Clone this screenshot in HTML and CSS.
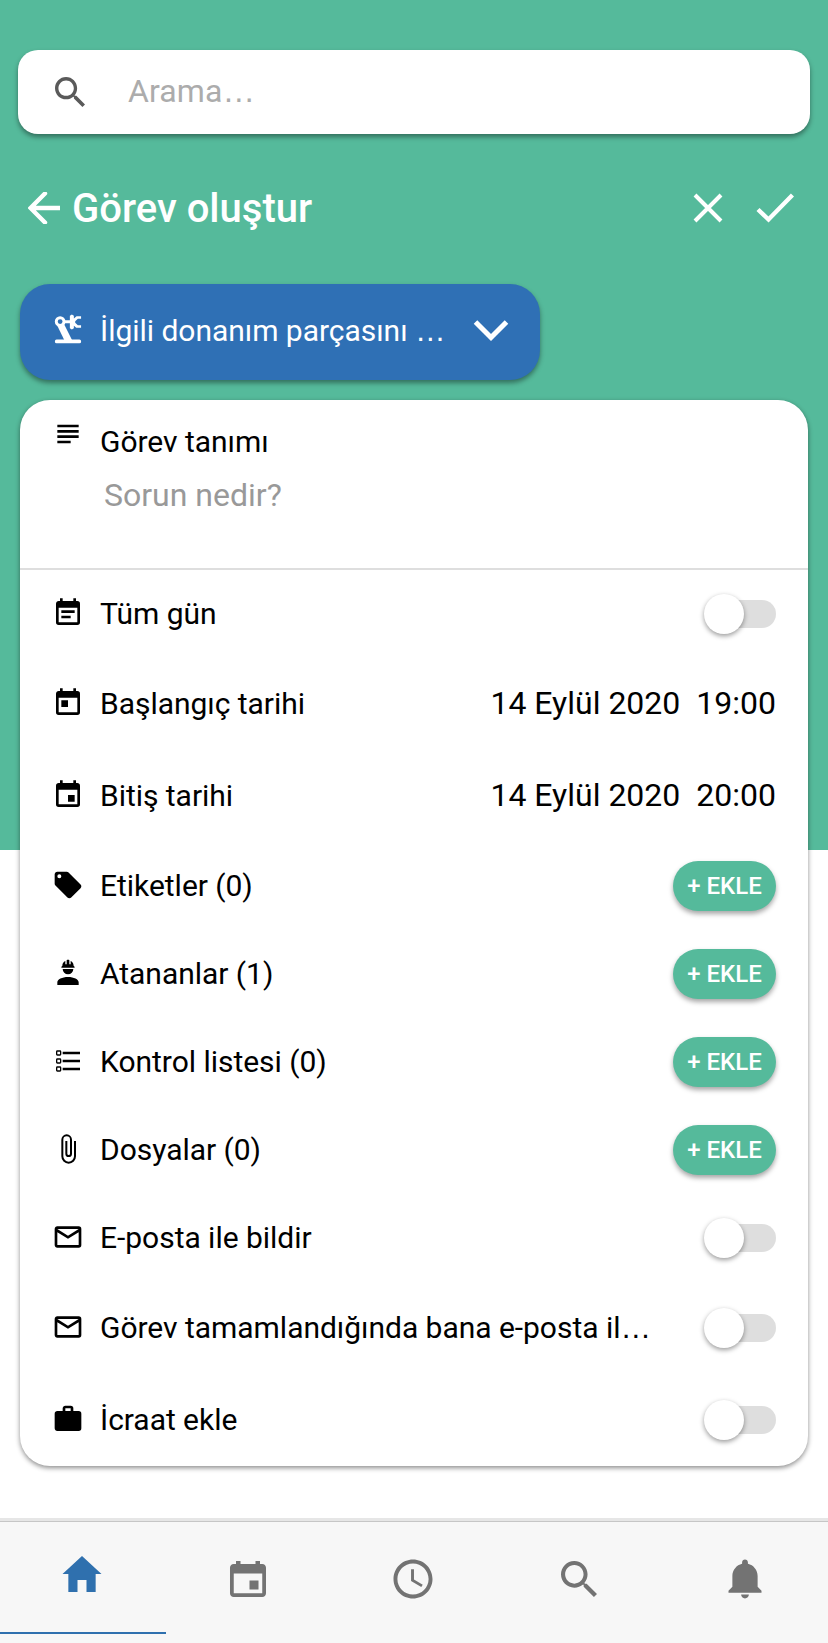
FILE: index.html
```html
<!DOCTYPE html>
<html lang="tr">
<head>
    <meta charset="UTF-8">
    <meta name="viewport" content="width=device-width, initial-scale=1.0">
    <title>Görev oluştur</title>
    <link rel="stylesheet" href="styles.css">
</head>
<body>
    <main class="page">
        <!-- Arama kutusu -->
        <div class="search-box">
            <svg class="search-icon" viewBox="0 0 512 512"><path d="M337.509 305.372h-17.501l-6.571-5.486c20.791-25.232 33.922-57.054 33.922-93.257C347.358 127.632 283.896 64 205.135 64 127.452 64 64 127.632 64 206.629s63.452 142.628 142.225 142.628c35.011 0 67.831-13.167 92.991-34.008l6.561 5.487v17.551L415.18 448 448 415.086 337.509 305.372zm-131.284 0c-54.702 0-98.463-43.887-98.463-98.743 0-54.858 43.761-98.742 98.463-98.742 54.7 0 98.462 43.884 98.462 98.742 0 54.856-43.762 98.743-98.462 98.743z"/></svg>
            <div class="search-input">Arama<span class="dots">…</span></div>
        </div>

        <!-- Başlık -->
        <header class="title-bar">
            <svg class="back" viewBox="0 0 32 32"><path d="M31.5 16H3M17 1.5L2.5 16L17 30.5"/></svg>
            <h1>Görev oluştur</h1>
            <svg class="close" viewBox="0 0 30 30"><path d="M2 2L28 28M28 2L2 28"/></svg>
            <svg class="check" viewBox="0 0 38 30"><path d="M2 16.5L12.5 26.5L36.5 2"/></svg>
        </header>

        <!-- Donanım seçimi -->
        <div class="asset-select">
            <svg class="icon" viewBox="0 0 24 24">
                <rect x="2.2" y="19.2" width="19.6" height="2.8" rx="1.2"/>
                <path d="M3.8 8.5L8.8 7.2L15 19.5H9.2Z"/>
                <circle class="joint" cx="6.1" cy="5.7" r="2.9"/>
                <path d="M9 4.7H13.4V1.4L14.9 .4L16.4 1.4V3.4L18.4 1.6H21.8V3.6H19.4L17.4 5.4V6.6L19.4 8.4H21.8V10.4H18.2L16.4 8.8V10.6L14.9 11.6L13.4 10.6V6.9H9Z"/>
            </svg>
            <span class="label">İlgili donanım parçasını <span class="dots">…</span></span>
            <svg class="chevron" viewBox="0 0 36 24"><path d="M2.5 3L18 18.5L33.5 3"/></svg>
        </div>

        <!-- Görev formu -->
        <section class="card">
            <div class="description">
                <div class="description-head">
                    <svg class="icon" viewBox="0 0 24 24"><path d="M4 5H20V7H4V5M4 9H20V11H4V9M4 13H20V15H4V13M4 17H14V19H4V17Z"/></svg>
                    <span class="label">Görev tanımı</span>
                </div>
                <input type="text" class="description-input" placeholder="Sorun nedir?">
            </div>

            <div class="row">
                <svg class="icon" viewBox="0 0 24 24"><path d="M14 14H7V16H14M19 19H5V8H19M19 3H18V1H16V3H8V1H6V3H5C3.89 3 3 3.9 3 5V19A2 2 0 0 0 5 21H19A2 2 0 0 0 21 19V5A2 2 0 0 0 19 3M17 10H7V12H17V10Z"/></svg>
                <span class="label">Tüm gün</span>
                <span class="toggle"></span>
            </div>
            <div class="row tall">
                <svg class="icon" viewBox="0 0 24 24"><path d="M7 10H12V15H7M19 19H5V8H19M19 3H18V1H16V3H8V1H6V3H5C3.89 3 3 3.9 3 5V19A2 2 0 0 0 5 21H19A2 2 0 0 0 21 19V5A2 2 0 0 0 19 3Z"/></svg>
                <span class="label">Başlangıç tarihi</span>
                <span class="date">14 Eylül 2020</span>
                <span class="time">19:00</span>
            </div>
            <div class="row tall">
                <svg class="icon" viewBox="0 0 24 24"><path d="M19 19H5V8H19M16 1V3H8V1H6V3H5C3.89 3 3 3.89 3 5V19A2 2 0 0 0 5 21H19A2 2 0 0 0 21 19V5C21 3.89 20.1 3 19 3H18V1M17 12H12V17H17V12Z"/></svg>
                <span class="label">Bitiş tarihi</span>
                <span class="date">14 Eylül 2020</span>
                <span class="time">20:00</span>
            </div>
            <div class="row">
                <svg class="icon" viewBox="0 0 24 24"><path d="M5.5 7A1.5 1.5 0 0 1 4 5.5A1.5 1.5 0 0 1 5.5 4A1.5 1.5 0 0 1 7 5.5A1.5 1.5 0 0 1 5.5 7M21.41 11.58L12.41 2.58C12.05 2.22 11.55 2 11 2H4C2.89 2 2 2.89 2 4V11C2 11.55 2.22 12.05 2.59 12.41L11.58 21.41C11.95 21.77 12.45 22 13 22C13.55 22 14.05 21.77 14.41 21.41L21.41 14.41C21.78 14.05 22 13.55 22 13C22 12.44 21.77 11.94 21.41 11.58Z"/></svg>
                <span class="label">Etiketler (0)</span>
                <button class="add">+ EKLE</button>
            </div>
            <div class="row">
                <svg class="icon" viewBox="0 0 24 24"><path d="M12 15C7.58 15 4 16.79 4 19V21H20V19C20 16.79 16.42 15 12 15M8 9A4 4 0 0 0 12 13A4 4 0 0 0 16 9M11.5 2C11.2 2 11 2.21 11 2.5V5.5H10V3C10 3 7.75 3.86 7.75 6.75C7.75 6.75 7 6.89 7 8H17C16.95 6.89 16.25 6.75 16.25 6.75C16.25 3.86 14 3 14 3V5.5H13V2.5C13 2.21 12.81 2 12.5 2H11.5Z"/></svg>
                <span class="label">Atananlar (1)</span>
                <button class="add">+ EKLE</button>
            </div>
            <div class="row">
                <svg class="icon" viewBox="0 0 24 24">
                    <path d="M8 5H21V7H8ZM8 11H21V13H8ZM8 17H21V19H8Z"/>
                    <g class="boxes">
                        <rect x="3.5" y="4.5" width="3" height="3" rx=".5"/>
                        <rect x="3.5" y="10.5" width="3" height="3" rx=".5"/>
                        <rect x="3.5" y="16.5" width="3" height="3" rx=".5"/>
                    </g>
                </svg>
                <span class="label">Kontrol listesi (0)</span>
                <button class="add">+ EKLE</button>
            </div>
            <div class="row">
                <svg class="icon" viewBox="0 0 24 24"><path d="M16.5 6V17.5A4 4 0 0 1 12.5 21.5A4 4 0 0 1 8.5 17.5V5A2.5 2.5 0 0 1 11 2.5A2.5 2.5 0 0 1 13.5 5V15.5A1 1 0 0 1 12.5 16.5A1 1 0 0 1 11.5 15.5V6H10V15.5A2.5 2.5 0 0 0 12.5 18A2.5 2.5 0 0 0 15 15.5V5A4 4 0 0 0 11 1A4 4 0 0 0 7 5V17.5A5.5 5.5 0 0 0 12.5 23A5.5 5.5 0 0 0 18 17.5V6H16.5Z"/></svg>
                <span class="label">Dosyalar (0)</span>
                <button class="add">+ EKLE</button>
            </div>
            <div class="row">
                <svg class="icon" viewBox="0 0 24 24"><path d="M4 4H20A2 2 0 0 1 22 6V18A2 2 0 0 1 20 20H4C2.89 20 2 19.1 2 18V6C2 4.89 2.89 4 4 4M12 11L20 6H4L12 11M4 18H20V8.37L12 13.36L4 8.37V18Z"/></svg>
                <span class="label">E-posta ile bildir</span>
                <span class="toggle"></span>
            </div>
            <div class="row tall">
                <svg class="icon" viewBox="0 0 24 24"><path d="M4 4H20A2 2 0 0 1 22 6V18A2 2 0 0 1 20 20H4C2.89 20 2 19.1 2 18V6C2 4.89 2.89 4 4 4M12 11L20 6H4L12 11M4 18H20V8.37L12 13.36L4 8.37V18Z"/></svg>
                <span class="label">Görev tamamlandığında bana e-posta il<span class="dots">…</span></span>
                <span class="toggle"></span>
            </div>
            <div class="row tall">
                <svg class="icon" viewBox="0 0 24 24"><path d="M10 2H14A2 2 0 0 1 16 4V6H20A2 2 0 0 1 22 8V19A2 2 0 0 1 20 21H4C2.89 21 2 20.1 2 19V8C2 6.89 2.89 6 4 6H8V4C8 2.89 8.89 2 10 2M14 6V4H10V6H14Z"/></svg>
                <span class="label">İcraat ekle</span>
                <span class="toggle"></span>
            </div>
        </section>
    </main>

    <!-- Alt menü -->
    <nav class="tabs">
        <a class="tab active"><svg viewBox="0 0 512 512"><path d="M208 448V320h96v128h97.6V256H464L256 64 48 256h62.4v192z"/></svg></a>
        <a class="tab"><svg viewBox="0 0 512 512"><path d="M368.005 272h-96v96h96v-96zm-32-208v32h-160V64h-48v32h-24.01c-22.002 0-40 17.998-40 40v272c0 22.002 17.998 40 40 40h304.01c22.002 0 40-17.998 40-40V136c0-22.002-17.998-40-40-40h-24V64h-48zm72 344h-304.01V196h304.01v212z"/></svg></a>
        <a class="tab"><svg viewBox="0 0 512 512"><path d="M255.8 48C141 48 48 141.2 48 256s93 208 207.8 208c115 0 208.2-93.2 208.2-208S370.8 48 255.8 48zm.2 374.4c-91.9 0-166.4-74.5-166.4-166.4S164.1 89.6 256 89.6 422.4 164.1 422.4 256 347.9 422.4 256 422.4z"/><path d="M266.4 152h-31.2v124.8l109.1 65.5 15.7-25.6-93.6-55.5V152z"/></svg></a>
        <a class="tab"><svg viewBox="0 0 512 512"><path d="M337.509 305.372h-17.501l-6.571-5.486c20.791-25.232 33.922-57.054 33.922-93.257C347.358 127.632 283.896 64 205.135 64 127.452 64 64 127.632 64 206.629s63.452 142.628 142.225 142.628c35.011 0 67.831-13.167 92.991-34.008l6.561 5.487v17.551L415.18 448 448 415.086 337.509 305.372zm-131.284 0c-54.702 0-98.463-43.887-98.463-98.743 0-54.858 43.761-98.742 98.463-98.742 54.7 0 98.462 43.884 98.462 98.742 0 54.856-43.762 98.743-98.462 98.743z"/></svg></a>
        <a class="tab"><svg viewBox="0 0 512 512"><path d="M256 464c22.779 0 41.411-18.719 41.411-41.6h-82.823c0 22.881 18.633 41.6 41.412 41.6zm134.589-124.8V224.8c0-63.44-44.516-117.518-103.53-131.041V79.2c0-17.682-13.457-31.2-31.059-31.2s-31.059 13.518-31.059 31.2v14.559c-59.015 13.523-103.53 67.601-103.53 131.041v114.4L80 380.8v20.8h352v-20.8l-41.411-41.6z"/></svg></a>
    </nav>
</body>
</html>
```
FILE: styles.css
```css
* {
    box-sizing: border-box;
}

body {
    font-family: Roboto, "Liberation Sans", sans-serif;
    margin: 0;
    height: 1643px;
    display: flex;
    flex-direction: column;
    color: #000;
    background: linear-gradient(#55ba9b 850px, #fff 850px);
}

svg {
    display: block;
    flex: none;
}

input {
    border: none;
    outline: none;
    background: none;
    padding: 0;
    font-family: inherit;
}

.page {
    flex: 1;
    padding: 50px 18px 0;
}

/* arama */
.search-box {
    display: flex;
    align-items: center;
    height: 84px;
    padding: 0 32px;
    background: #fff;
    border-radius: 20px;
    box-shadow: 0 3px 5px rgba(0,0,0,0.4);
}

.search-icon {
    width: 40px;
    height: 40px;
    fill: #5a5a5a;
}

.search-input {
    flex: 1;
    margin-left: 38px;
    padding-bottom: 2px;
    font-size: 32px;
    line-height: 38px;
    letter-spacing: 0.1px;
    color: #acacac;
}

/* wide ellipsis */
.dots {
    font-family: "Liberation Sans", sans-serif;
    font-size: 1.02em;
    line-height: 1;
    letter-spacing: 0;
}

/* başlık */
.title-bar {
    display: flex;
    align-items: center;
    height: 148px;
    padding: 0 15px 0 10px;
}

.title-bar svg {
    fill: none;
    stroke: #fff;
    stroke-width: 4;
}

.title-bar h1 {
    flex: 1;
    margin: 0 0 0 12px;
    font-size: 40px;
    font-weight: 500;
    color: #fff;
}

.title-bar .back {
    width: 32px;
    height: 32px;
    stroke-width: 4.4;
    stroke-linecap: round;
}

.title-bar .close {
    width: 30px;
    height: 30px;
    margin-bottom: 1px;
}

.title-bar .check {
    width: 38px;
    height: 30px;
    margin: 0 1px 1px 33px;
    stroke-width: 4.4;
}

.icon {
    width: 32px;
    height: 32px;
    margin-right: 16px;
    fill: #000;
}

.label {
    flex: 1;
    font-size: 30px;
    line-height: 36px;
    letter-spacing: -0.03px;
    white-space: nowrap;
}

/* donanım */
.asset-select {
    display: flex;
    align-items: center;
    width: 520px;
    height: 96px;
    margin: 2px 2px 20px;
    padding: 0 31px 4px 32px;
    color: #fff;
    background: #2f70b5;
    border-radius: 30px;
    box-shadow: 0 3px 5px rgba(0,0,0,0.4);
}

.asset-select .icon {
    fill: #fff;
}

.asset-select .label {
    margin-top: 2px;
}

.asset-select .joint {
    fill: #2f70b5;
    stroke: #fff;
    stroke-width: 2.2;
}

.chevron {
    width: 36px;
    height: 24px;
    margin-top: 2px;
    fill: none;
    stroke: #fff;
    stroke-width: 5;
}

/* form */
.card {
    margin: 0 2px;
    background: #fff;
    border-radius: 30px;
    box-shadow: 0 2px 5px rgba(0,0,0,0.45);
}

.description {
    height: 170px;
    padding-top: 18px;
    border-bottom: 2px solid #dedede;
}

.description-head {
    display: flex;
    padding-left: 32px;
}

.description-head .label {
    margin-top: 6px;
}

.description-input {
    display: block;
    width: 600px;
    margin: 16px 0 0 84px;
    font-size: 32px;
}

.description-input::placeholder {
    color: #999;
    opacity: 1;
}

.row {
    display: flex;
    align-items: center;
    height: 88px;
    padding: 0 32px;
}

.row.tall {
    height: 92px;
}

.row .icon {
    margin-bottom: 2px;
}

.boxes {
    fill: none;
    stroke: #000;
    stroke-width: 1;
}

.date, .time {
    font-size: 32px;
    margin-bottom: 2px;
}

.time {
    margin-left: 16px;
}

.add {
    width: 103px;
    height: 50px;
    padding: 0;
    border: none;
    border-radius: 25px;
    font-family: inherit;
    font-size: 24px;
    font-weight: 500;
    color: #fff;
    background: #55ba9b;
    box-shadow: 0 3px 5px rgba(0,0,0,0.35);
}

.toggle {
    width: 72px;
    height: 28px;
    display: flex;
    align-items: center;
    background: linear-gradient(#dedede, #dedede) right / 56px 28px no-repeat;
    border-radius: 14px;
}

.toggle::before {
    content: "";
    width: 40px;
    height: 40px;
    flex: none;
    border-radius: 50%;
    background: #fff;
    box-shadow: 0 2px 5px rgba(0,0,0,0.4);
}

/* alt menü */
.tabs {
    display: flex;
    height: 122px;
    background: #f7f7f7;
    border-top: 1px solid #c6c6c6;
    box-shadow: 0 -3px 0 #e6e6e6;
}

.tab {
    flex: 1;
    height: 112px;
    padding: 33px 1px 0 0;
}

.tab svg {
    width: 48px;
    height: 48px;
    margin: 0 auto;
    fill: #737373;
}

.tab.active {
    padding-top: 28px;
    border-bottom: 2px solid #2f70ae;
}

.tab.active svg {
    fill: #2f70ae;
}
```
